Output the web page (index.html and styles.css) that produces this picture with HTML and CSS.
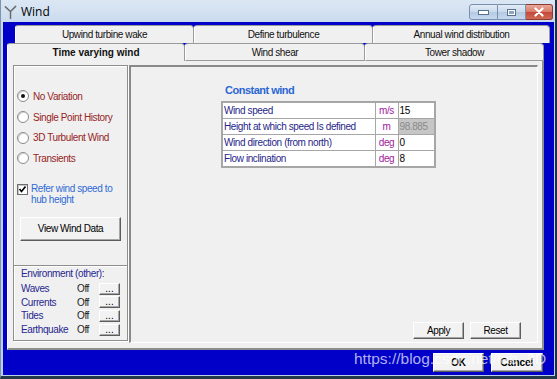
FILE: index.html
```html
<!DOCTYPE html>
<html lang="en">
<head>
  <meta charset="UTF-8" />
  <title>Wind</title>
  <link rel="stylesheet" href="styles.css">
</head>
<body>
  <div class="window">
    <div class="titlebar">
      <svg class="app-icon" viewBox="0 0 14 16">
        <path d="M7 8 L1.5 3 M7 8 L12.5 2.5 M7 8 L7 15.5" stroke="#6b6b6b" stroke-width="1.6" fill="none" stroke-linecap="round"/>
      </svg>
      <span class="title">Wind</span>
      <div class="caption-btns">
        <div class="cap cap-min"><span class="min-bar"></span></div>
        <div class="cap cap-max"><span class="max-box"></span></div>
        <div class="cap cap-close">
          <svg viewBox="0 0 12 10"><path d="M2.5 1.5 L9.5 8.5 M9.5 1.5 L2.5 8.5" stroke="#fff" stroke-width="2.2" stroke-linecap="round"/></svg>
        </div>
      </div>
    </div>

    <div class="client">
      <div class="tabrow upper">
        <div class="tab" style="width:179px">Upwind turbine wake</div>
        <div class="tab" style="width:179px">Define turbulence</div>
        <div class="tab" style="width:177px">Annual wind distribution</div>
      </div>
      <div class="tabrow lower">
        <div class="tab active" style="width:178px">Time varying wind</div>
        <div class="tab" style="width:180px">Wind shear</div>
        <div class="tab" style="width:179px">Tower shadow</div>
      </div>

      <div class="page">
        <div class="left-group">
          <div class="radios">
            <div class="radio-row"><span class="radio checked"></span>No Variation</div>
            <div class="radio-row"><span class="radio"></span>Single Point History</div>
            <div class="radio-row"><span class="radio"></span>3D Turbulent Wind</div>
            <div class="radio-row"><span class="radio"></span>Transients</div>
          </div>
          <div class="check-row">
            <span class="checkbox">
              <svg viewBox="0 0 9 9"><path d="M1.5 4 L3.5 6.5 L7.5 1.5" stroke="#000" stroke-width="1.6" fill="none"/></svg>
            </span>
            <span class="check-label">Refer wind speed to<br>hub height</span>
          </div>
          <button class="btn view-btn">View Wind Data</button>

          <div class="env">
            <div class="env-title">Environment (other):</div>
            <div class="env-row"><span class="env-name">Waves</span><span class="env-val">Off</span><button class="btn dots">...</button></div>
            <div class="env-row"><span class="env-name">Currents</span><span class="env-val">Off</span><button class="btn dots">...</button></div>
            <div class="env-row"><span class="env-name">Tides</span><span class="env-val">Off</span><button class="btn dots">...</button></div>
            <div class="env-row"><span class="env-name">Earthquake</span><span class="env-val">Off</span><button class="btn dots">...</button></div>
          </div>
        </div>

        <div class="right-panel">
          <div class="const-title">Constant wind</div>
          <table class="params">
            <colgroup><col style="width:153px"><col style="width:23px"><col style="width:37px"></colgroup>
            <tr><td class="p-name">Wind speed</td><td class="p-unit">m/s</td><td class="p-val">15</td></tr>
            <tr><td class="p-name">Height at which speed Is defined</td><td class="p-unit">m</td><td class="p-val disabled">98.885</td></tr>
            <tr><td class="p-name">Wind direction (from north)</td><td class="p-unit">deg</td><td class="p-val">0</td></tr>
            <tr><td class="p-name">Flow inclination</td><td class="p-unit">deg</td><td class="p-val">8</td></tr>
          </table>
          <div class="actions">
            <button class="btn act-btn">Apply</button>
            <button class="btn act-btn">Reset</button>
          </div>
        </div>
      </div>

      <div class="dialog-btns">
        <button class="btn dlg-btn">OK</button>
        <button class="btn dlg-btn">Cancel</button>
      </div>
    </div>

    <div class="watermark">https://blog.csdn.net/lab_3D</div>
  </div>
</body>
</html>
```

FILE: styles.css
```css
body {
  margin: 0;
  width: 557px;
  height: 379px;
  overflow: hidden;
  font-family: "Liberation Sans", Arial, sans-serif;
  font-size: 10px;
  letter-spacing: -0.4px;
  color: #000;
}
.window {
  position: relative;
  width: 557px;
  height: 379px;
  box-sizing: border-box;
  display: flex;
  flex-direction: column;
  background: linear-gradient(#dce7f4, #c4d7ec 30px, #bcd0e8);
  border-left: 1px solid #7d94ad;
  border-right: 2px solid #1d3446;
  border-bottom: 3px solid #22394a;
  padding: 0 1px 1px 2px;
}

/* title bar */
.titlebar {
  height: 22px;
  display: flex;
  align-items: center;
  flex-shrink: 0;
}
.app-icon {
  width: 13px;
  height: 15px;
  margin-left: 1px;
}
.title {
  margin-left: 4px;
  font-family: "Open Sans", "Liberation Sans", sans-serif;
  font-size: 12px;
  letter-spacing: 0;
  color: #000;
}
.caption-btns {
  margin-left: auto;
  margin-right: 1px;
  display: flex;
  align-self: flex-start;
  margin-top: 4px;
}
.cap {
  height: 16px;
  width: 27px;
  box-sizing: border-box;
  border: 1px solid #7890ad;
  display: flex;
  align-items: center;
  justify-content: center;
  background: linear-gradient(#e3ecf7, #cad9ec 50%, #b5c9e2 51%, #c6d8ee);
}
.cap-min {
  border-radius: 3px 0 0 3px;
  width: 29px;
}
.cap-max {
  border-left: none;
  width: 28px;
}
.cap-close {
  width: 27px;
  border-left: none;
  border-color: #8c3a33;
  border-radius: 0 3px 3px 0;
  background: linear-gradient(#e9a99c, #d67966 50%, #c4473a 51%, #d06a55);
}
.cap-close svg {
  width: 12px;
  height: 10px;
}
.min-bar {
  width: 9px;
  height: 3px;
  background: #fff;
  border: 1px solid #56708f;
}
.max-box {
  width: 7px;
  height: 5px;
  border: 1px solid #56708f;
  box-shadow: inset 0 0 0 1px #fff;
  background: #8ea5c2;
}

/* client area */
.client {
  flex: 1;
  background: #0000c8;
  padding: 3px 0 0 4px;
  display: flex;
  flex-direction: column;
}
.tabrow {
  display: flex;
  height: 18px;
}
.tabrow.upper {
  margin-left: 8px;
}
.tab {
  box-sizing: border-box;
  height: 18px;
  background: #f0f0f0;
  border: 1px solid #9a9a9a;
  border-bottom: none;
  border-left-color: #fff;
  border-radius: 3px 4px 0 0;
  text-align: center;
  line-height: 17px;
  color: #111;
  white-space: nowrap;
}
.tabrow.lower .tab {
  border-bottom: 1px solid #9a9a9a;
}
.tabrow.lower .tab.active {
  font-weight: bold;
  letter-spacing: 0;
  border-bottom: none;
  border-left-color: #fff;
}

/* tab page */
.page {
  width: 537px;
  height: 289px;
  box-sizing: border-box;
  background: #f0f0f0;
  border-left: 1px solid #fff;
  border-right: 2px solid #8e8e8e;
  border-bottom: 2px solid #8e8e8e;
  padding: 4px 0 0 5px;
  display: flex;
}
.left-group {
  width: 115px;
  height: 276px;
  box-sizing: border-box;
  border: 1px solid #8e8e8e;
  box-shadow: 1px 1px 0 #fff, inset 1px 1px 0 #fff;
  display: flex;
  flex-direction: column;
}
.radios {
  padding-top: 20px;
}
.radio-row {
  height: 20.7px;
  display: flex;
  align-items: center;
  color: #962525;
  white-space: nowrap;
}
.radio {
  width: 12px;
  height: 12px;
  box-sizing: border-box;
  border-radius: 50%;
  background: #fff;
  border: 1px solid #8a8a8a;
  box-shadow: inset 1px 1px 0 #d6d6d6;
  margin: 0 4px 0 3px;
  position: relative;
}
.radio.checked::after {
  content: "";
  position: absolute;
  left: 3px;
  top: 3px;
  width: 4px;
  height: 4px;
  border-radius: 50%;
  background: #111;
}
.check-row {
  display: flex;
  margin-top: 14px;
  margin-left: 3px;
}
.checkbox {
  width: 11px;
  height: 11px;
  box-sizing: border-box;
  background: #fff;
  border: 1px solid #6e6e6e;
  box-shadow: inset 1px 1px 0 #c8c8c8;
  margin-top: 1px;
  margin-right: 3px;
  display: flex;
  align-items: center;
  justify-content: center;
}
.checkbox svg {
  width: 9px;
  height: 9px;
}
.check-label {
  color: #2f6bd6;
  line-height: 11px;
  white-space: nowrap;
}
.btn {
  font-family: inherit;
  font-size: 10px;
  letter-spacing: -0.4px;
  color: #000;
  background: #f2f2f2;
  border: 1px solid;
  border-color: #fff #5c5c5c #5c5c5c #fff;
  box-shadow: inset -1px -1px 0 #a6a6a6;
  padding: 0;
  cursor: pointer;
}
.view-btn {
  width: 101px;
  height: 24px;
  margin: 12px 0 0 6px;
}
.env {
  margin-top: 24px;
  border-top: 1px solid #8e8e8e;
  box-shadow: inset 0 1px 0 #fff;
  padding: 1px 0 0 7px;
  color: #272790;
}
.env-title {
  height: 13px;
  line-height: 13px;
  margin-bottom: 2px;
}
.env-row {
  height: 13.7px;
  display: flex;
  align-items: center;
}
.env-name {
  width: 56px;
}
.env-val {
  width: 22px;
  color: #1b1b1b;
}
.dots {
  width: 21px;
  height: 12px;
  line-height: 6px;
  letter-spacing: 0;
}

/* right panel */
.right-panel {
  width: 409px;
  height: 278px;
  box-sizing: border-box;
  margin-left: 1px;
  border-top: 2px solid #8a8a8a;
  border-left: 2px solid #8a8a8a;
  border-right: 1px solid #fff;
  border-bottom: 1px solid #fff;
  display: flex;
  flex-direction: column;
}
.const-title {
  margin: 17px 0 0 94px;
  font-weight: bold;
  color: #2a67d4;
  font-size: 11px;
  letter-spacing: -0.5px;
}
.params {
  margin: 5px 0 0 90px;
  width: 213px;
  table-layout: fixed;
  border-collapse: collapse;
  border: 2px solid #a6a6a6;
  background: #fff;
}
.params td {
  border: 1px solid #a6a6a6;
  height: 15px;
  padding: 0 1px;
  white-space: nowrap;
  overflow: hidden;
}
.p-name {
  color: #1f1f88;
}
.p-unit {
  text-align: center;
  color: #a0209e;
}
.p-val {
  color: #000;
}
.p-val.disabled {
  background: #c6c6c6;
  color: #8a8a8a;
}
.actions {
  margin-top: auto;
  display: flex;
  justify-content: flex-end;
  gap: 6px;
  padding: 0 16px 3px 0;
}
.act-btn {
  width: 51px;
  height: 17px;
}

/* dialog buttons */
.dialog-btns {
  display: flex;
  justify-content: flex-end;
  gap: 7px;
  margin-top: 3px;
  padding-right: 11px;
}
.dlg-btn {
  height: 19px;
  width: 51px;
  font-weight: bold;
  letter-spacing: 0;
}
.dlg-btn + .dlg-btn {
  width: 52px;
}
.watermark {
  position: absolute;
  left: 353px;
  top: 350px;
  font-family: "Liberation Sans", Arial, sans-serif;
  font-size: 15.5px;
  letter-spacing: 0;
  color: rgba(255, 255, 255, 0.7);
  white-space: nowrap;
}
```
